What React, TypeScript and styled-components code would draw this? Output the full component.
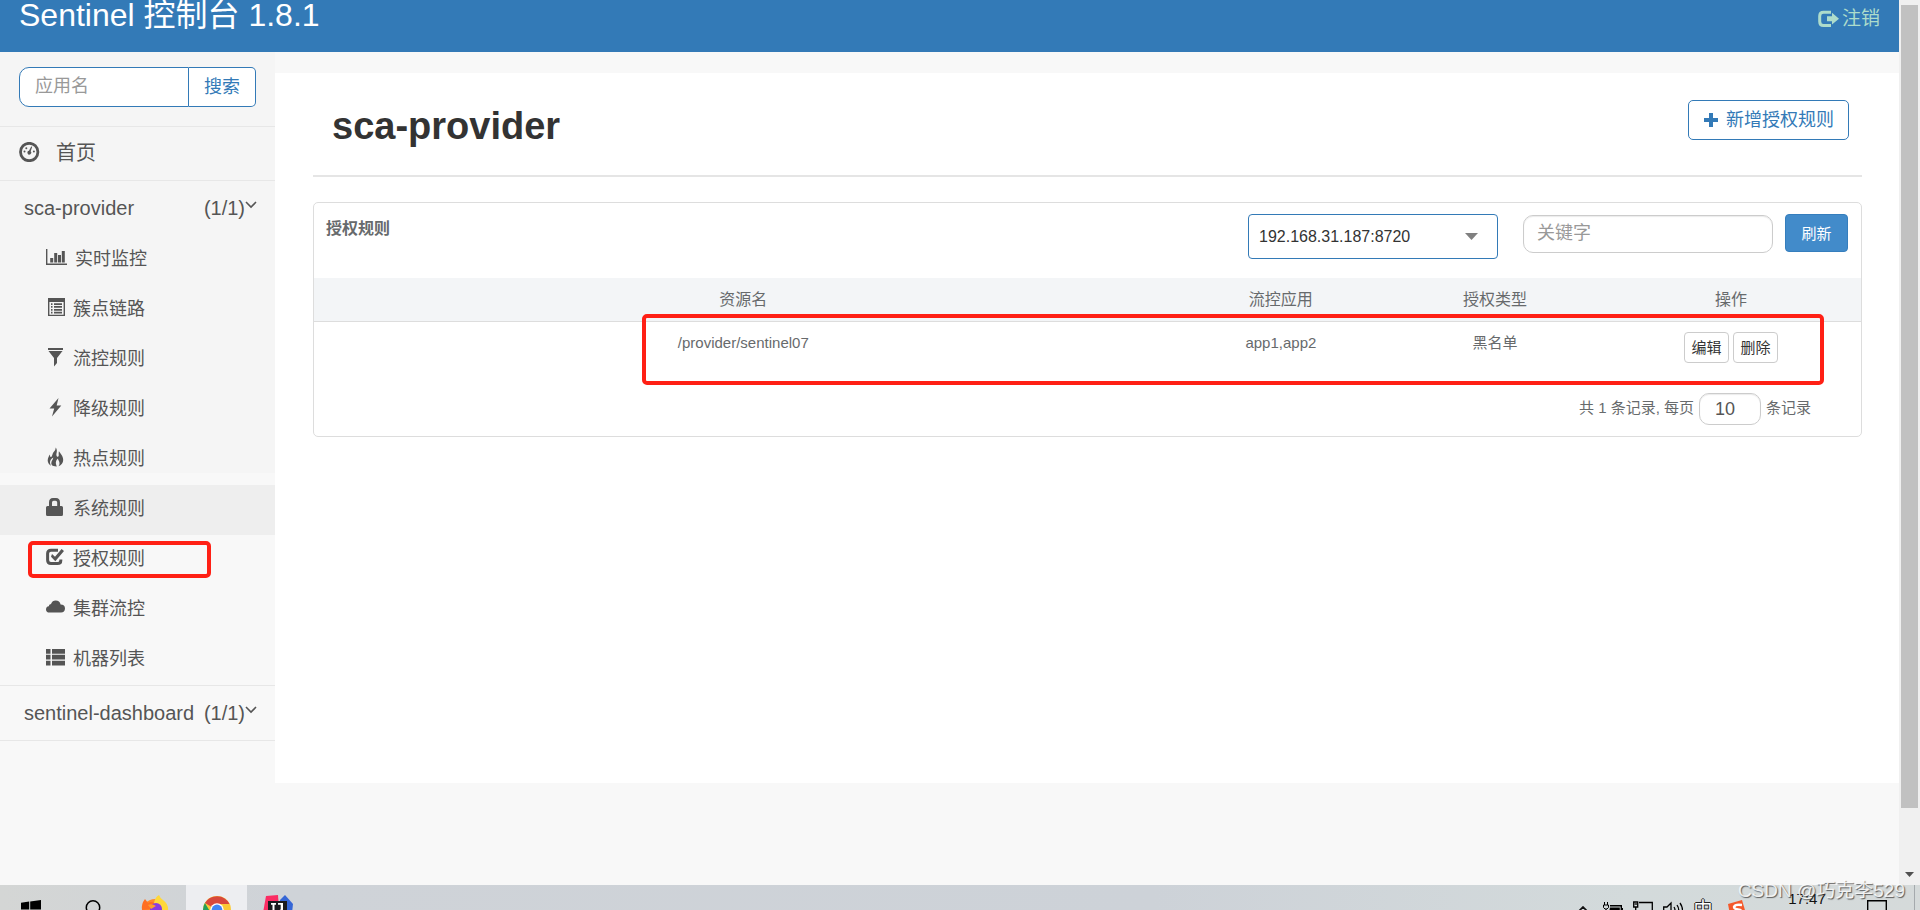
import React from "react";
import styled, { createGlobalStyle, css } from "styled-components";

const GlobalStyle = createGlobalStyle`
  *, *::before, *::after { box-sizing: border-box; }
  body {
    margin: 0;
    font-family: "Liberation Sans", "Noto Sans CJK SC", sans-serif;
    color: #555;
    background: #f8f8f8;
  }
  button, input, select { font-family: inherit; margin: 0; }
  svg { display: block; flex: none; }
`;

const Desktop = styled.div`
  display: flex;
  flex-direction: column;
  height: 100vh;
  overflow: hidden;
`;

const BrowserArea = styled.div`
  display: flex;
  flex: 1;
  min-height: 0;
`;

const Page = styled.div`
  display: flex;
  flex-direction: column;
  flex: 1;
  min-width: 0;
`;

/* ---------- top bar ---------- */

const TopBar = styled.header`
  display: flex;
  justify-content: space-between;
  height: 52px;
  padding: 0 19px;
  background: #337ab7;
`;

const Brand = styled.a`
  font-size: 32px;
  line-height: 30px;
  color: #fff;
  text-decoration: none;
  white-space: nowrap;
`;

const Logout = styled.a`
  display: flex;
  align-items: center;
  gap: 3px;
  height: 38px;
  font-size: 19px;
  line-height: 38px;
  color: #addccb;
  text-decoration: none;
`;

/* ---------- sidebar ---------- */

const Body = styled.div`
  display: flex;
  flex: 1;
  min-height: 0;
`;

const Sidebar = styled.nav`
  width: 275px;
  flex: none;
  background: linear-gradient(#f5f5f5 421px, #f8f8f8 421px);
`;

const Search = styled.form`
  display: flex;
  padding: 15px 19px 19px;
  border-bottom: 1px solid #e7e7e7;
`;

const SearchInput = styled.input`
  flex: 1;
  min-width: 0;
  height: 40px;
  padding: 0 15px 2px;
  font-size: 18px;
  color: #555;
  background: #fff;
  border: 1px solid #337ab7;
  border-radius: 10px 0 0 10px;
  outline: none;
  &::placeholder { color: #999; opacity: 1; }
`;

const OutlineButton = styled.button<{ $joined?: boolean }>`
  display: flex;
  align-items: center;
  justify-content: center;
  gap: 7px;
  height: 40px;
  padding: 0 14px;
  font-size: 18px;
  line-height: 38px;
  color: #337ab7;
  background: #fff;
  border: 1px solid #337ab7;
  border-radius: 5px;
  white-space: nowrap;
  ${(p) =>
    p.$joined &&
    css`
      padding: 0 15px;
      border-left: 0;
      border-radius: 0 5px 5px 0;
    `}
`;

const HomeLink = styled.a`
  display: flex;
  align-items: center;
  gap: 16px;
  height: 54px;
  padding: 0 19px 4px;
  font-size: 20px;
  color: #555;
  text-decoration: none;
  border-bottom: 1px solid #e7e7e7;
`;

const AppRow = styled.a<{ $closed?: boolean }>`
  display: flex;
  align-items: center;
  box-sizing: content-box;
  height: 54px;
  padding: 0 18px 0 24px;
  font-size: 20px;
  color: #555;
  text-decoration: none;
  white-space: nowrap;
  border-bottom: ${(p) => (p.$closed ? "1px solid #e7e7e7" : "0")};
`;

const AppName = styled.span`
  flex: 1;
`;

const MenuList = styled.ul`
  margin: 0;
  padding: 0;
  list-style: none;
  border-bottom: 1px solid #e7e7e7;
`;

const MenuItem = styled.li<{ $hover?: boolean }>`
  position: relative;
  background: ${(p) => (p.$hover ? "#eee" : "transparent")};
`;

const MenuLink = styled.a`
  display: flex;
  align-items: center;
  gap: 8px;
  height: 50px;
  padding: 0 46px 6px;
  font-size: 18px;
  color: #555;
  text-decoration: none;
`;

const Highlight = styled.div`
  position: absolute;
  border: 4px solid #ff2015;
  border-radius: 5px;
  pointer-events: none;
`;

const MenuHighlight = styled(Highlight)`
  top: 6px;
  left: 28px;
  right: 64px;
  height: 37px;
`;

/* ---------- main ---------- */

const Main = styled.main`
  flex: 1;
  min-width: 0;
  margin: 21px 0 102px;
  padding: 0 37px 0 38px;
  background: #fff;
`;

const PageHead = styled.div`
  display: flex;
  align-items: center;
  justify-content: space-between;
  height: 104px;
  padding: 0 13px 8px 19px;
  border-bottom: 2px solid #e5e5e5;
`;

const Title = styled.h1`
  margin: 0;
  padding-top: 12px;
  font-size: 38px;
  line-height: 44px;
  color: #333;
`;

const Panel = styled.section`
  position: relative;
  margin-top: 25px;
  color: #676a6c;
  border: 1px solid #ddd;
  border-radius: 5px;
`;

const PanelHead = styled.div`
  display: flex;
  align-items: flex-start;
  height: 75px;
  padding: 11px 13px 0 12px;
`;

const PanelTitle = styled.h2`
  flex: 1;
  margin: 0;
  font-size: 16px;
  line-height: 30px;
`;

const SelectBox = styled.div`
  position: relative;
  width: 250px;
  margin-right: 25px;
`;

const Select = styled.select`
  display: block;
  width: 100%;
  height: 45px;
  padding: 0 10px;
  font-size: 16px;
  color: #333;
  background: #fff;
  border: 1px solid #337ab7;
  border-radius: 4px;
  appearance: none;
  outline: none;
`;

const Caret = styled.svg`
  position: absolute;
  top: 19px;
  right: 20px;
  pointer-events: none;
`;

const RoundInput = styled.input<{ $small?: boolean }>`
  width: ${(p) => (p.$small ? "62px" : "250px")};
  height: ${(p) => (p.$small ? "32px" : "38px")};
  padding: ${(p) => (p.$small ? "0 15px" : "0 13px 1px")};
  font-size: 18px;
  color: #555;
  background: #fff;
  border: 1px solid #ccc;
  border-radius: 10px;
  box-shadow: inset 0 1px 1px rgba(0, 0, 0, 0.08);
  outline: none;
  &::placeholder { color: #999; opacity: 1; }
`;

const KeywordInput = styled(RoundInput)`
  margin: 1px 12px 0 0;
`;

const RefreshButton = styled.button`
  width: 63px;
  height: 38px;
  padding: 0 0 1px;
  font-size: 15px;
  color: #fff;
  background: #428bca;
  border: 1px solid #357ebd;
  border-radius: 4px;
`;

const Table = styled.table`
  width: 100%;
  table-layout: fixed;
  border-collapse: collapse;
  text-align: center;
`;

const Col = styled.col<{ $w: string }>`
  width: ${(p) => p.$w};
`;

const Th = styled.th`
  height: 43px;
  padding: 0 0 2px;
  font-size: 16px;
  font-weight: 400;
  background: #f3f5f7;
  border-bottom: 1px solid #ddd;
`;

const Td = styled.td`
  height: 63px;
  padding: 10px 0 0;
  font-size: 15px;
  line-height: 22px;
  vertical-align: top;
`;

const Actions = styled.div`
  display: flex;
  justify-content: center;
  gap: 4px;
`;

const SmallButton = styled.button`
  width: 45px;
  height: 31px;
  padding: 0 0 2px;
  font-size: 15px;
  color: #333;
  background: #fff;
  border: 1px solid #ccc;
  border-radius: 4px;
`;

const Pager = styled.div`
  display: flex;
  align-items: center;
  justify-content: flex-end;
  gap: 5px;
  padding: 9px 50px 11px;
  font-size: 15px;
  line-height: 30px;
`;

const PagerText = styled.span`
  padding-bottom: 2px;
`;

const RowHighlight = styled(Highlight)`
  top: 111px;
  left: 328px;
  right: 37px;
  height: 71px;
`;

/* ---------- scroll bar ---------- */

const ScrollTrack = styled.div`
  display: flex;
  flex-direction: column;
  align-items: center;
  width: 21px;
  padding: 5px 2px 8px;
  background: #f0f0f0;
`;

const ScrollThumb = styled.div`
  width: 17px;
  flex: 1;
  margin-bottom: 64px;
  background: #c1c1c1;
`;

/* ---------- task bar ---------- */

const TaskBar = styled.footer`
  position: relative;
  height: 25px;
  flex: none;
  color: #111;
  background: linear-gradient(90deg, #d4d6d5, #cfd3d8 15%, #cdd2d8 60%, #d3dadb 85%, #d5dada);
`;

const TaskClip = styled.div`
  display: flex;
  height: 25px;
  overflow: hidden;
`;

const TaskSlot = styled.div<{ $active?: boolean; $w?: number }>`
  display: flex;
  align-items: center;
  justify-content: center;
  flex: none;
  width: ${(p) => p.$w ?? 62}px;
  height: 50px;
  background: ${(p) => (p.$active ? "#edeef1" : "transparent")};
`;

const Spacer = styled.div`
  flex: 1;
`;

const Clock = styled.time`
  width: 102px;
  padding-top: 4px;
  font-size: 15px;
  line-height: 20px;
  text-align: center;
`;

const ShowDesktop = styled.div`
  width: 6px;
  margin-left: 18px;
  border-left: 1px solid #a5aaad;
`;

const ImeMark = styled.span`
  font-size: 19px;
  line-height: 20px;
  color: #fff;
  text-shadow: 1px 0 0 #222, -1px 0 0 #222, 0 1px 0 #222, 0 -1px 0 #222;
`;

const Watermark = styled.div`
  position: absolute;
  top: -9px;
  right: 15px;
  font-size: 19px;
  line-height: 30px;
  color: rgba(255, 255, 255, 0.85);
  text-shadow: 1px 1px 1px rgba(60, 60, 60, 0.8);
  white-space: nowrap;
`;

/* ---------- icons ---------- */

const Glyph = ({ w = 19, children }: { w?: number; children: React.ReactNode }) => (
  <svg width={w} height="20" viewBox={`0 0 ${w} 20`} fill="currentColor" aria-hidden="true">
    {children}
  </svg>
);

const ChartIcon = () => (
  <Glyph w={21}>
    <path d="M0 2h1.4v14.400H21V18H0zM4.200 11h3v4.500h-3zM8.200 6h3v9.500h-3zM12 8h3v7.500h-3zM15.800 4h3v11.500h-3z" />
  </Glyph>
);
const ListAltIcon = () => (
  <Glyph>
    <path fillRule="evenodd" d="M2 1h17v18H2zM3.400 5v12.700h14.200V5z" />
    <path d="M5 6.300h1.500v1.600H5zM8 6.300h8v1.600H8zM5 9.100h1.500v1.700H5zM8 9.100h8v1.700H8zM5 12h1.500v1.700H5zM8 12h8v1.700H8zM5 14.800h1.500v1.700H5zM8 14.800h8v1.700H8z" />
  </Glyph>
);
const FilterIcon = () => (
  <Glyph>
    <path d="M2 1h15v2H2zM2.500 4h14L11 11v5l-3 3.500V11z" />
  </Glyph>
);
const FlashIcon = () => (
  <Glyph>
    <path d="M12.500 1 3.500 11.500h4.700L6 19.500l9.300-11h-4.600z" />
  </Glyph>
);
const FireIcon = () => (
  <Glyph>
    <path d="M9.600.5c2.600 3 .4 5.500.9 8 .3 1.700 2 1.800 2.200.2.200-1.200-.3-2 .2-4.500 1.500 2.300 4.300 4.700 4.300 8.800 0 3-1.800 5.200-4.700 6.200.9-1.400 1.300-2.700.8-4.300-.4-1.300-1.300-2-1.300-3.400-1.600 1.400-2.400 3.200-2.100 5 .1 1 .5 2 .9 2.900C6 19.500 5 17.500 5.400 15.500c.2-1.600 1.500-2.600 1.900-4.900-2.100 1.300-3.500 3.200-3.300 5.100 0 1.100.5 2 1 3C3 17.500 1.700 15.700 1.700 13.500c0-2.400 1.300-4.300 2-6 .4 1 .3 1.900.9 2.500 1.300.5 1.500-1.800 2.200-3.500C7.600 4.500 9.800 3.500 9.600.5z" />
  </Glyph>
);
const LockIcon = () => (
  <Glyph>
    <path fillRule="evenodd" d="M3 9V5.500Q3 1 7 1h3q4 0 4 4.500V9h1.500Q17 9 17 10.500V17.500Q17 19 15.500 19H1.500Q0 19 0 17.500V10.500Q0 9 1.500 9zM6 9h5.200V5.500Q11.200 3.700 9.500 3.700H7.700Q6 3.700 6 5.500z" />
  </Glyph>
);
const CheckIcon = () => (
  <Glyph>
    <path d="M12 3.300H5Q1.600 3.300 1.600 6.500V13Q1.600 16.600 5 16.600H11.500Q14.800 16.600 14.800 13.500V12.500" fill="none" stroke="currentColor" strokeWidth="3" />
    <path d="M6 7 9 9.700 15.600 2 18 4 9.300 14.200 5 9.700z" />
  </Glyph>
);
const CloudIcon = () => (
  <Glyph>
    <path d="M3.600 15.500Q0 15.500 0 12.400 0 9.600 2.800 9.200 2.700 7 5 6.900 6.300 3.500 9.700 3.500 13.800 3.500 14.600 7.600 19 7.600 19 11.600 18.800 15.500 15 15.500z" />
  </Glyph>
);
const ThListIcon = () => (
  <Glyph>
    <path d="M0 2h4.500v4.700H0zM6 2h13v4.700H6zM0 7.800h4.500v4.700H0zM6 7.800h13v4.700H6zM0 13.800h4.500v4.700H0zM6 13.800h13v4.700H6z" />
  </Glyph>
);
const GaugeIcon = () => (
  <Glyph w={21}>
    <circle cx="10.200" cy="10" r="8.700" fill="none" stroke="currentColor" strokeWidth="2.800" />
    <circle cx="5.500" cy="9.500" r="1" />
    <circle cx="7.300" cy="6.200" r="1" />
    <circle cx="14.900" cy="9.500" r="1" />
    <path d="M13.200 4.800 11.700 9.300A1.900 1.900 0 1 1 10 8.800L12.200 4.500z" />
  </Glyph>
);
const ChevronIcon = () => (
  <svg width="12" height="20" viewBox="0 0 12 20" fill="none" stroke="currentColor" strokeWidth="1.600" aria-hidden="true">
    <path d="M1 4 6 9 11 4" />
  </svg>
);
const LogoutIcon = () => (
  <svg width="21" height="20" viewBox="0 0 21 20" fill="currentColor" aria-hidden="true">
    <path d="M13 3.200H5.500Q1.700 3.200 1.700 7v5.500Q1.700 16.500 5.500 16.500H13" fill="none" stroke="currentColor" strokeWidth="3" />
    <path d="M9 7.300h5V3.800L21 9.700 14 15.600V12.200H9z" />
  </svg>
);
const PlusIcon = () => (
  <svg width="16" height="16" viewBox="0 0 16 16" fill="currentColor" aria-hidden="true">
    <path d="M6 1h4v5h5v4h-5v5H6v-5H1V6h5z" />
  </svg>
);

const WindowsIcon = () => (
  <svg width="20" height="20" viewBox="0 0 20 20" aria-hidden="true">
    <path d="M0 2.800 8.200 1.500V9.500H0zM9.200 1.400 20 0V9.500H9.200zM0 10.500h8.200v8L0 17.300zM9.200 10.500H20V20L9.200 18.600z" fill="#000" />
  </svg>
);
const SearchIcon = () => (
  <svg width="20" height="20" viewBox="0 0 20 20" fill="none" stroke="#000" strokeWidth="1.500" aria-hidden="true">
    <circle cx="10" cy="7.500" r="6.700" />
    <path d="m6 13-5 6" />
  </svg>
);
const FirefoxIcon = () => (
  <svg width="30" height="30" viewBox="0 0 30 30" aria-hidden="true">
    <circle cx="15" cy="17" r="13" fill="#ff8a2a" />
    <path d="M14 8Q15 2 19 0q1 3 4 5 6 4 5 12L20 15z" fill="#ffd83a" />
    <path d="M2 15Q1 9 5 4l3 4q3-2 6 0l-2 6z" fill="#ff6f22" />
    <circle cx="16" cy="14" r="6" fill="#8a3be0" />
    <path d="M8 10q4-2 8 1l-5 3z" fill="#ff9a2e" />
  </svg>
);
const ChromeIcon = () => (
  <svg width="30" height="30" viewBox="0 0 30 30" aria-hidden="true">
    <circle cx="15" cy="15" r="14" fill="#fbc934" />
    <path d="M15 15 2.900 8A14 14 0 0 1 27.500 9H15z" fill="#d8483c" />
    <path d="M2.900 8A14 14 0 0 0 14 29l6-11H9z" fill="#25a05a" />
    <circle cx="15" cy="15" r="6.800" fill="#fff" />
    <circle cx="15" cy="15" r="5.400" fill="#4285f4" />
  </svg>
);
const IdeaIcon = () => (
  <svg width="30" height="30" viewBox="0 0 30 30" aria-hidden="true">
    <path d="M3 1 15 0 16 14 0 18z" fill="#fb2c63" />
    <path d="M17 5 22 0l8 9-2 18-12-3z" fill="#3566d6" />
    <path d="M5 18h15v11H9z" fill="#f98a3a" />
    <path d="M5 6h19v19H5z" fill="#1b1b1f" />
    <path d="M8 8h5v1.800h-1.500v5.400H13V17H8v-1.800h1.500V9.800H8zM15 8h5v6q0 3-3 3h-2v-2h1.500q1.200 0 1.200-1.200V9.800H15z" fill="#fff" />
  </svg>
);
const UpIcon = () => (
  <svg width="12" height="8" viewBox="0 0 12 8" fill="none" stroke="#111" strokeWidth="1.700" aria-hidden="true">
    <path d="m1 6 5-5 5 5" />
  </svg>
);
const BatteryIcon = () => (
  <svg width="20" height="16" viewBox="0 0 20 16" aria-hidden="true">
    <path d="M7 3.700h11.300v8.600H4V8" fill="none" stroke="#000" strokeWidth="1.400" />
    <path d="M7 5.500h9.800v5H6zM18.500 6H20v4h-1.500z" fill="#000" />
    <path d="M1.500 0v3M4.500 0v3M.5 3h5v2.500L4 7H2L.5 5.500zM3 7v3" fill="none" stroke="#000" />
  </svg>
);
const NetworkIcon = () => (
  <svg width="20" height="18" viewBox="0 0 20 18" fill="none" stroke="#000" strokeWidth="1.300" aria-hidden="true">
    <path d="M6 1.500h13.300v11H5M.7 1h4v5h-4zM2.700 6v10M8 17h8" />
    <path d="M1.500 3h2.500" />
  </svg>
);
const SpeakerIcon = () => (
  <svg width="20" height="20" viewBox="0 0 20 20" fill="none" stroke="#000" strokeWidth="1.300" aria-hidden="true">
    <path d="M.7 7H4l4-4v14l-4-4H.7zM11 7q2 3 0 6M14 5q3.500 5 0 10M17 3q5 7 0 14" />
  </svg>
);
const SogouIcon = () => (
  <svg width="20" height="20" viewBox="0 0 20 20" aria-hidden="true">
    <path d="M1 4 15 0l5 17L4 20z" fill="#f4592b" />
    <path d="M15 5Q8 4 7 7q0 2 4 2.500t4 3Q14 16 7 15" fill="none" stroke="#fff" strokeWidth="2.400" />
  </svg>
);
const NoticeIcon = () => (
  <svg width="20" height="20" viewBox="0 0 20 20" fill="none" stroke="#000" strokeWidth="1.400" aria-hidden="true">
    <path d="M.7.700h18.600v14H13l-3 4v-4H.7z" />
  </svg>
);

/* ---------- data ---------- */

const menu = [
  { label: "实时监控", icon: <ChartIcon /> },
  { label: "簇点链路", icon: <ListAltIcon /> },
  { label: "流控规则", icon: <FilterIcon /> },
  { label: "降级规则", icon: <FlashIcon /> },
  { label: "热点规则", icon: <FireIcon /> },
  { label: "系统规则", icon: <LockIcon />, hover: true },
  { label: "授权规则", icon: <CheckIcon />, marked: true },
  { label: "集群流控", icon: <CloudIcon /> },
  { label: "机器列表", icon: <ThListIcon /> },
];

const rules = [{ resource: "/provider/sentinel07", app: "app1,app2", type: "黑名单" }];

export default function App() {
  return (
    <>
      <GlobalStyle />
      <Desktop>
        <BrowserArea>
          <Page>
            <TopBar>
              <Brand href="#">Sentinel 控制台 1.8.1</Brand>
              <Logout href="#">
                <LogoutIcon />
                注销
              </Logout>
            </TopBar>
            <Body>
              <Sidebar>
                <Search onSubmit={(e) => e.preventDefault()}>
                  <SearchInput placeholder="应用名" aria-label="应用名" />
                  <OutlineButton $joined>搜索</OutlineButton>
                </Search>
                <HomeLink href="#">
                  <GaugeIcon />
                  首页
                </HomeLink>
                <AppRow href="#">
                  <AppName>sca-provider</AppName>
                  (1/1)
                  <ChevronIcon />
                </AppRow>
                <MenuList>
                  {menu.map((m) => (
                    <MenuItem key={m.label} $hover={m.hover}>
                      <MenuLink href="#">
                        {m.icon}
                        {m.label}
                      </MenuLink>
                      {m.marked && <MenuHighlight />}
                    </MenuItem>
                  ))}
                </MenuList>
                <AppRow href="#" $closed>
                  <AppName>sentinel-dashboard</AppName>
                  (1/1)
                  <ChevronIcon />
                </AppRow>
              </Sidebar>
              <Main>
                <PageHead>
                  <Title>sca-provider</Title>
                  <OutlineButton type="button">
                    <PlusIcon />
                    新增授权规则
                  </OutlineButton>
                </PageHead>
                <Panel>
                  <PanelHead>
                    <PanelTitle>授权规则</PanelTitle>
                    <SelectBox>
                      <Select aria-label="机器">
                        <option>192.168.31.187:8720</option>
                      </Select>
                      <Caret width="13" height="7" viewBox="0 0 13 7" aria-hidden="true">
                        <path d="M0 0h13L6.500 7z" fill="#808080" />
                      </Caret>
                    </SelectBox>
                    <KeywordInput placeholder="关键字" aria-label="关键字" />
                    <RefreshButton type="button">刷新</RefreshButton>
                  </PanelHead>
                  <Table>
                    <colgroup>
                      <Col $w="55.500%" />
                      <Col $w="14%" />
                      <Col $w="13.700%" />
                      <Col $w="16.800%" />
                    </colgroup>
                    <thead>
                      <tr>
                        <Th>资源名</Th>
                        <Th>流控应用</Th>
                        <Th>授权类型</Th>
                        <Th>操作</Th>
                      </tr>
                    </thead>
                    <tbody>
                      {rules.map((r) => (
                        <tr key={r.resource}>
                          <Td>{r.resource}</Td>
                          <Td>{r.app}</Td>
                          <Td>{r.type}</Td>
                          <Td>
                            <Actions>
                              <SmallButton type="button">编辑</SmallButton>
                              <SmallButton type="button">删除</SmallButton>
                            </Actions>
                          </Td>
                        </tr>
                      ))}
                    </tbody>
                  </Table>
                  <Pager>
                    <PagerText>共 1 条记录, 每页</PagerText>
                    <RoundInput $small defaultValue="10" aria-label="每页条数" />
                    <PagerText>条记录</PagerText>
                  </Pager>
                  <RowHighlight />
                </Panel>
              </Main>
            </Body>
          </Page>
          <ScrollTrack>
            <ScrollThumb />
            <svg width="9" height="5" viewBox="0 0 9 5" aria-hidden="true">
              <path d="M0 0h9L4.500 5z" fill="#505050" />
            </svg>
          </ScrollTrack>
        </BrowserArea>
        <TaskBar>
          <TaskClip>
            <TaskSlot><WindowsIcon /></TaskSlot>
            <TaskSlot><SearchIcon /></TaskSlot>
            <TaskSlot><FirefoxIcon /></TaskSlot>
            <TaskSlot $active $w={61}><ChromeIcon /></TaskSlot>
            <TaskSlot $w={61}><IdeaIcon /></TaskSlot>
            <Spacer />
            <TaskSlot $w={30}><UpIcon /></TaskSlot>
            <TaskSlot $w={30}><BatteryIcon /></TaskSlot>
            <TaskSlot $w={30}><NetworkIcon /></TaskSlot>
            <TaskSlot $w={30}><SpeakerIcon /></TaskSlot>
            <TaskSlot $w={30}><ImeMark>中</ImeMark></TaskSlot>
            <TaskSlot $w={38}><SogouIcon /></TaskSlot>
            <Clock>17:47</Clock>
            <TaskSlot $w={38}><NoticeIcon /></TaskSlot>
            <ShowDesktop />
          </TaskClip>
          <Watermark>CSDN @巧克李529</Watermark>
        </TaskBar>
      </Desktop>
    </>
  );
}
